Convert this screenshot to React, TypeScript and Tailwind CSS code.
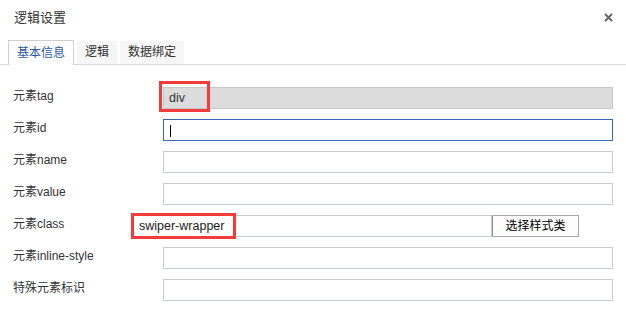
const fields = [
  { label: "元素tag", value: "div", kind: "disabled" },
  { label: "元素id", value: "", kind: "focus" },
  { label: "元素name", value: "", kind: "plain" },
  { label: "元素value", value: "", kind: "plain" },
  { label: "元素class", value: "swiper-wrapper", kind: "class" },
  { label: "元素inline-style", value: "", kind: "plain" },
  { label: "特殊元素标识", value: "", kind: "plain" },
];

function Field({ label, value, kind }: { label: string; value: string; kind: string }) {
  return (
    <div className="flex items-start h-[22px]">
      <div className="w-[163px] shrink-0 pl-[13px] leading-[18px] text-[12px] text-[#333]">{label}</div>
      {kind === "class" ? (
        <div className="flex items-start -ml-[30px]">
          <div className="relative w-[359px] h-[22px] border border-[#c7ccd1] pl-[5px] leading-[20px] text-[12.5px] text-[#222]">
            {value}
            <span className="absolute -left-[3px] -top-[3px] w-[105px] h-[26px] border-[3px] border-[#f23c3c]" />
          </div>
          <button className="w-[87px] h-[22px] border border-[#a6a6a6] border-l-[#8f8f8f] bg-[#fdfdfd] text-[12px] leading-[20px] text-black">
            选择样式类
          </button>
        </div>
      ) : (
        <div
          className={
            kind === "disabled"
              ? "relative w-[450px] h-[22px] border border-[#c7c7c7] bg-[#dcdcdc] pl-[5px] leading-[20px] text-[12.5px] text-[#333]"
              : kind === "focus"
              ? "relative w-[450px] h-[22px] border border-[#3a68b4] bg-white pl-[6px] pt-[5px]"
              : "w-[450px] h-[22px] border border-[#c7ccd1] bg-white"
          }
        >
          {kind === "focus" && <div className="w-px h-[12px] bg-black" />}
          {kind === "disabled" && (
            <>
              {value}
              <span className="absolute -left-[5px] -top-[7px] w-[51px] h-[31px] border-[3px] border-[#f23c3c]" />
            </>
          )}
        </div>
      )}
    </div>
  );
}

export default function App() {
  return (
    <div className="w-[626px] h-[317px] bg-white overflow-hidden font-['Liberation_Sans','Noto_Sans_CJK_SC',sans-serif]">
      {/* Header */}
      <div className="flex items-center justify-between h-[35px] pl-[14px] pr-[13px]">
        <span className="text-[13px] text-[#333]">逻辑设置</span>
        <svg width="9" height="9" viewBox="0 0 9 9">
          <path d="M1 1L8 8M8 1L1 8" stroke="#666" strokeWidth="2" />
        </svg>
      </div>

      {/* Tabs */}
      <div className="mt-[5px] flex items-end gap-[3px] pl-[8px] border-b border-[#d6d6d6] h-[25px]">
        <div className="h-[25px] -mb-px px-[8px] border border-b-0 border-[#cfcfcf] bg-white text-[12px] leading-[24px] text-[#2b5aa6]">
          基本信息
        </div>
        <div className="h-[23px] px-[8px] bg-[#f6f6f6] text-[12px] leading-[23px] text-[#333]">逻辑</div>
        <div className="h-[23px] px-[8px] bg-[#f6f6f6] text-[12px] leading-[23px] text-[#333]">数据绑定</div>
      </div>

      {/* Form */}
      <div className="pt-[22px] flex flex-col gap-[10px]">
        {fields.map((f) => (
          <Field key={f.label} {...f} />
        ))}
      </div>
    </div>
  );
}
